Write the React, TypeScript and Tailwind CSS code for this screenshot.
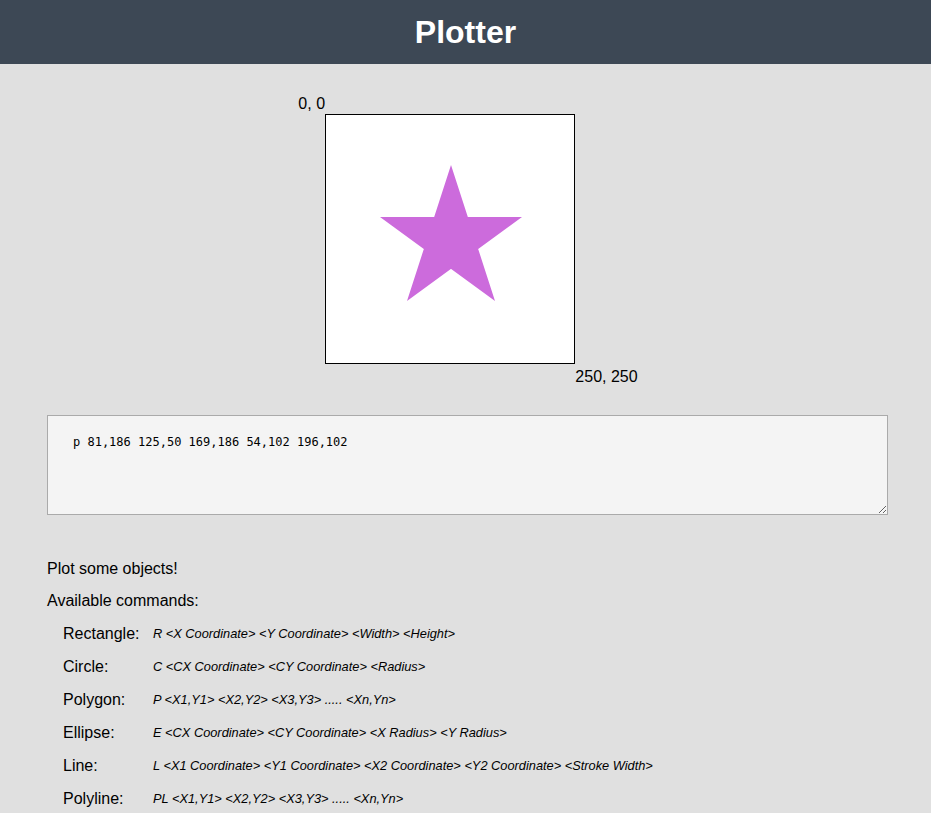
import { useState } from 'react';

const commands = [
  { name: 'Rectangle:', usage: 'R <X Coordinate> <Y Coordinate> <Width> <Height>' },
  { name: 'Circle:', usage: 'C <CX Coordinate> <CY Coordinate> <Radius>' },
  { name: 'Polygon:', usage: 'P <X1,Y1> <X2,Y2> <X3,Y3> ..... <Xn,Yn>' },
  { name: 'Ellipse:', usage: 'E <CX Coordinate> <CY Coordinate> <X Radius> <Y Radius>' },
  { name: 'Line:', usage: 'L <X1 Coordinate> <Y1 Coordinate> <X2 Coordinate> <Y2 Coordinate> <Stroke Width>' },
  { name: 'Polyline:', usage: 'PL <X1,Y1> <X2,Y2> <X3,Y3> ..... <Xn,Yn>' },
];

function App() {
  const [input, setInput] = useState('p 81,186 125,50 169,186 54,102 196,102');

  return (
    <div className="min-h-[813px] bg-[#e0e0e0] text-black font-['Liberation_Sans',Arial,sans-serif]">
      <header className="h-16 bg-[#3d4855] flex items-center justify-center">
        <h1 className="text-[32px] font-bold text-white">Plotter</h1>
      </header>

      <div className="flex flex-col items-center pt-[29px] pl-[32px]">
        <div className="flex flex-col">
          <p className="text-base leading-[21px] -ml-[27px]">0, 0</p>
          <svg width="250" height="250" className="bg-white border border-black">
            <polygon points="81,186 125,50 169,186 54,102 196,102" fill="#cc6bdc" />
          </svg>
          <p className="text-base leading-[26px] pl-[250px] whitespace-nowrap">250, 250</p>
        </div>
      </div>

      <div className="px-[47px] pt-[25px]">
        <textarea
          className="block w-[841px] h-[100px] bg-[#f4f4f4] border border-[#aaaaaa] px-[25px] py-[17px] font-['DejaVu_Sans_Mono',monospace] text-[12px] text-black outline-0"
          value={input}
          onChange={(e) => setInput(e.target.value)}
        />

        <div className="pt-[38px]">
          <p className="text-base leading-[32px]">Plot some objects!</p>
          <p className="text-base leading-[32px]">Available commands:</p>
          <div className="pl-4">
            {commands.map((cmd) => (
              <div key={cmd.name} className="flex items-center h-[33px]">
                <span className="w-[90px] text-base">{cmd.name}</span>
                <span className="text-[12.8px] italic">{cmd.usage}</span>
              </div>
            ))}
          </div>
        </div>
      </div>
    </div>
  );
}

export default App;
